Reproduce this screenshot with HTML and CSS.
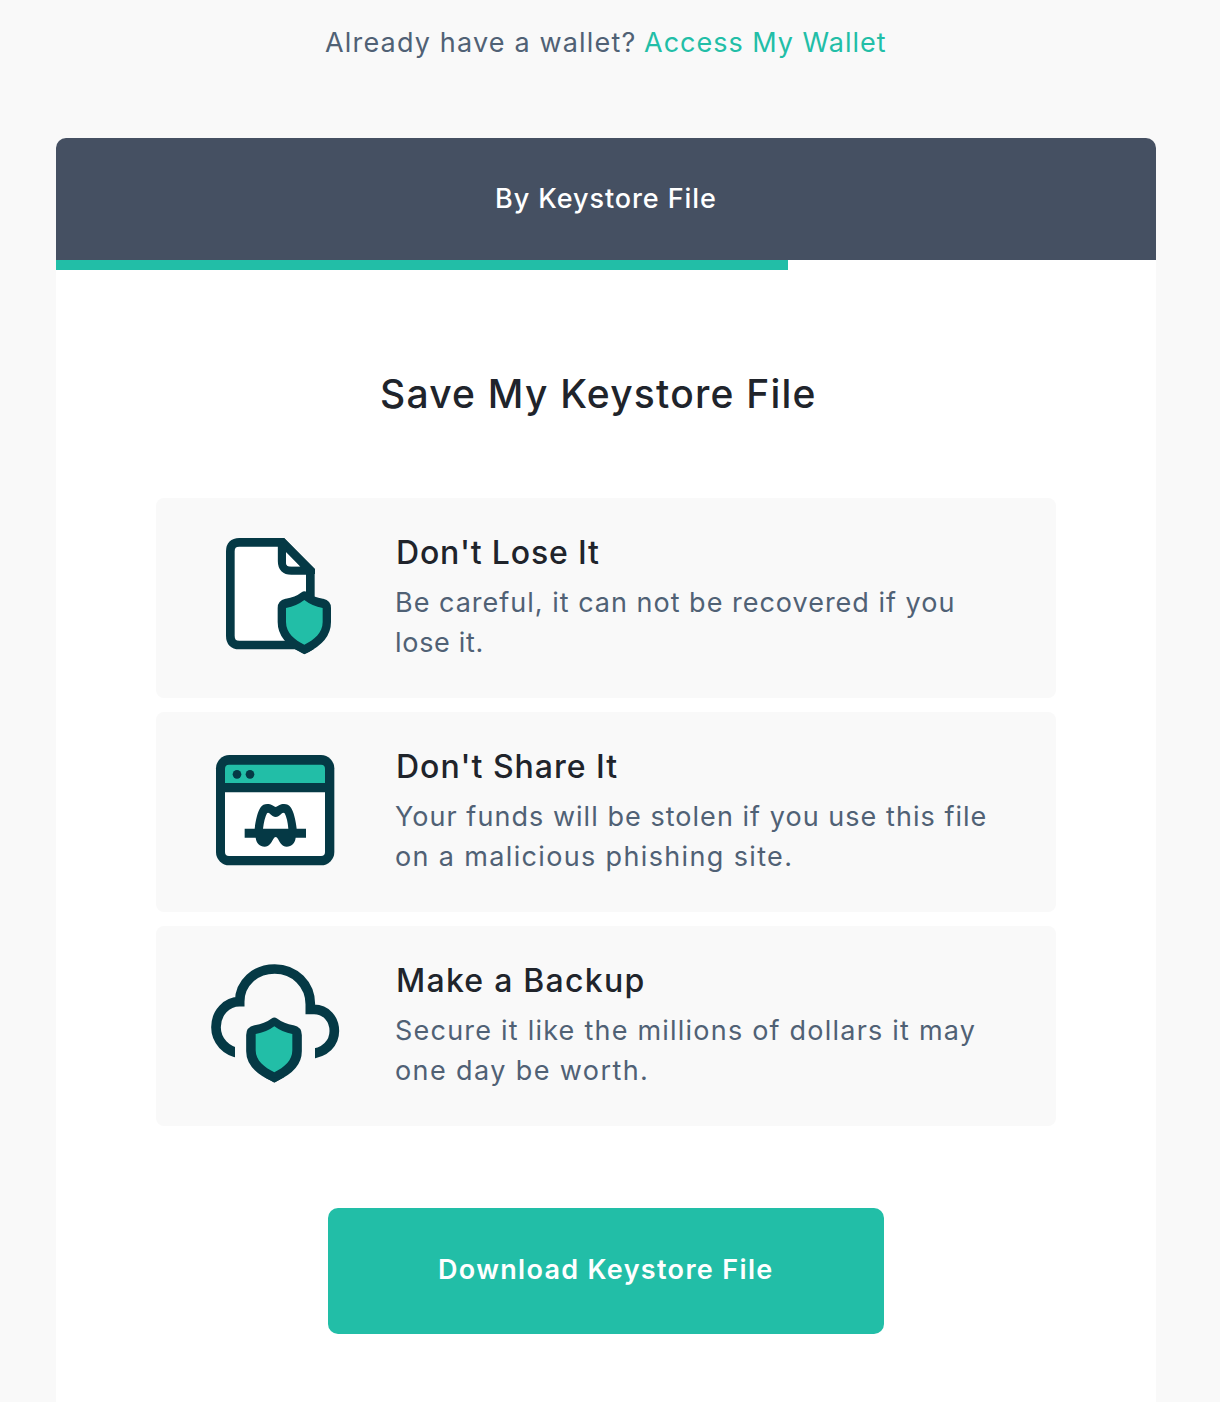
FILE: index.html
```html
<!DOCTYPE html>
<html lang="en">
<head>
<meta charset="utf-8">
<title>Save My Keystore File</title>
<link rel="stylesheet" href="styles.css">
</head>
<body>
<p class="signin"><span class="question">Already have a wallet?</span> <a class="link" href="#">Access My Wallet</a></p>
<main class="panel">
  <header class="panel-header"><span>By Keystore File</span></header>
  <div class="progress"><div class="progress-bar"></div></div>
  <h1 class="title"><span>Save My Keystore File</span></h1>
  <section class="cards">
    <article class="card">
      <svg class="icon" viewBox="0 9 450 450">
        <path d="M247 67H118Q91 67 91 94V347Q91 375 118 375H331V152Z" fill="#fff" stroke="#053945" stroke-width="26"/>
        <path d="M246 67V124Q246 152 274 152H331" fill="none" stroke="#053945" stroke-width="25"/>
        <path d="M241 54H252L345 147V162H318Z" fill="#053945"/>
        <path d="M258 97V128Q258 139 270 139H299Z" fill="#fff"/>
        <path d="M300 387L342 340L400 387V420H300Z" fill="#f9f9f9"/>
        <path d="M313 227Q290 245 259 249Q246 252 246 264V306C246 347 279 372 313 388C347 372 380 347 380 306V264Q380 252 367 249Q336 245 313 227Z" fill="#053945" stroke="#053945" stroke-width="26" stroke-linejoin="round"/>
        <path d="M285 387Q300 394 313 403Q328 396 343 386Z" fill="#053945"/>
        <path d="M313 240Q290 258 258 264V306C258 339 284 360 313 374C342 360 368 339 368 306V264Q336 258 313 240Z" fill="#22bea7"/>
      </svg>
      <div class="copy">
        <h2 class="lose-title">Don't Lose It</h2>
        <p><span class="lose-first">Be careful, it can not be recovered if you</span><br><span class="lose-last">lose it.</span></p>
      </div>
    </article>
    <article class="card">
      <svg class="icon" viewBox="0 -9 450 450">
        <rect x="48" y="45" width="355" height="331" rx="40" fill="#053945"/>
        <path d="M75 129V86Q75 74 87 74H363Q375 74 375 86V129Z" fill="#22bea7"/>
        <path d="M75 157H375V336Q375 348 363 348H87Q75 348 75 336Z" fill="#fff"/>
        <circle cx="111" cy="103" r="13" fill="#053945"/><circle cx="150" cy="103" r="13" fill="#053945"/>
        <path d="M134 266H164C167 238 173 216 181 203C188 192 200 190 210 193C218 195 222 201 227 201C232 201 236 195 244 193C254 190 266 192 273 203C281 216 287 238 290 266H318V293H287C285 309 275 320 260 320C246 320 241 309 234 297Q231 291 227 291Q223 291 220 297C213 309 208 320 194 320C179 320 169 309 167 293H134Z" fill="#053945"/>
        <path d="M189 266Q193 235 201 220Q204 216 208 220Q218 231 227 231Q236 231 246 220Q250 216 254 220Q262 235 265 266Z" fill="#fff"/>
      </svg>
      <div class="copy">
        <h2 class="share-title">Don't Share It</h2>
        <p><span class="share-first">Your funds will be stolen if you use this file</span><br><span class="share-last">on a malicious phishing site.</span></p>
      </div>
    </article>
    <article class="card">
      <svg class="icon" viewBox="0 3 450 450">
        <path d="M125 311C77 306 48 270 48 232C48 188 80 155 119 155C119 98 166 57 224 57C285 57 331 104 331 163V178H342C378 178 403 207 403 243C403 277 378 310 325 312" fill="none" stroke="#053945" stroke-width="29"/>
        <path d="M105 280H345V335H105Z" fill="#f9f9f9"/>
        <path d="M223 216Q199 234 166 239Q152 242 152 255V304C152 343 186 366 223 382C260 366 292 343 292 304V255Q292 242 278 239Q247 234 223 216Z" fill="#053945" stroke="#053945" stroke-width="27" stroke-linejoin="round"/>
        <path d="M193 382Q208 389 223 398Q238 390 253 381Z" fill="#053945"/>
        <path d="M223 229Q199 247 167 252V301C167 332 193 352 223 367C253 352 277 332 277 301V252Q247 247 223 229Z" fill="#22bea7"/>
      </svg>
      <div class="copy">
        <h2 class="backup-title">Make a Backup</h2>
        <p><span class="backup-first">Secure it like the millions of dollars it may</span><br><span class="backup-last">one day be worth.</span></p>
      </div>
    </article>
  </section>
  <button class="download"><span>Download Keystore File</span></button>
</main>
</body>
</html>
```
FILE: styles.css
```css
* { box-sizing: border-box; }
body { margin: 0; background: #f9f9f9; font-family: Inter, sans-serif; color: #20242b; height: 1402px; overflow: hidden; }
p, h1, h2 { margin: 0; }
.signin { height: 138px; padding: 23px 0 0 325px; font-size: 27px; line-height: 40px; color: #506175; white-space: nowrap; }
.question { letter-spacing: 1.17px; }
.link { color: #22bea7; text-decoration: none; letter-spacing: 1px; }
.panel { width: 1100px; height: 1264px; margin-left: 56px; background: #fff; border-radius: 10px 10px 0 0; overflow: hidden; }
.panel-header { height: 122px; background: #455062; color: #fff; font-size: 27px; font-weight: 500; line-height: 122px; padding-left: 439px; letter-spacing: .93px; white-space: nowrap; }
.progress { height: 10px; }
.progress-bar { width: 732px; height: 10px; background: #22bea7; }
.title { padding: 94px 0 0 324px; height: 228px; font-size: 39px; line-height: 60px; font-weight: 500; letter-spacing: 1.23px; white-space: nowrap; }
.cards { display: flex; flex-direction: column; gap: 14px; padding: 0 100px; }
.card { display: flex; height: 200px; border-radius: 8px; background: #f9f9f9; }
.icon { flex: none; width: 150px; height: 150px; margin: 25px 45px 0 44px; }
.copy { padding-top: 35px; white-space: nowrap; }
.copy h2 { padding-left: 1px; font-size: 32px; line-height: 40px; font-weight: 500; }
.copy p { margin-top: 10px; font-size: 27px; line-height: 40px; color: #506175; }
.lose-title { letter-spacing: .83px; }
.lose-first { letter-spacing: 1px; }
.lose-last { letter-spacing: .7px; }
.share-title { letter-spacing: 1px; }
.share-first { letter-spacing: 1.04px; }
.share-last { letter-spacing: 1.35px; }
.backup-title { letter-spacing: 1.25px; }
.backup-first { letter-spacing: 1.22px; }
.backup-last { letter-spacing: 1.4px; }
.download { display: block; width: 556px; height: 126px; margin: 82px 0 0 272px; padding: 0 0 3px 110px; border: 0; border-radius: 10px; background: #22bea7; color: #fff; font: 600 27px Inter, sans-serif; letter-spacing: 1.33px; text-align: left; white-space: nowrap; }
```
